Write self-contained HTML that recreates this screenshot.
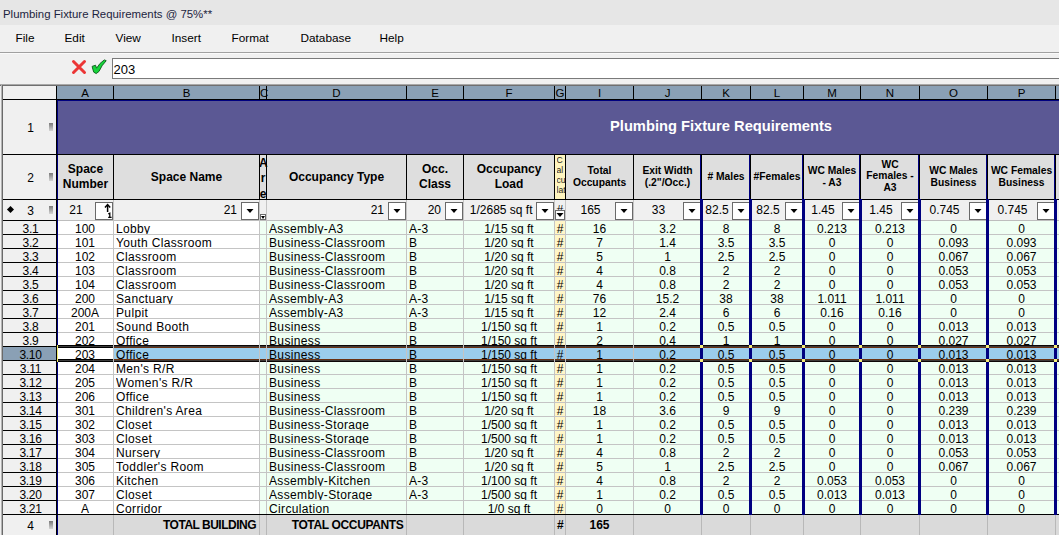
<!DOCTYPE html>
<html><head><meta charset="utf-8"><style>
html,body{margin:0;padding:0;}
body{width:1059px;height:535px;position:relative;overflow:hidden;background:#f0f0f0;font-family:"Liberation Sans",sans-serif;}
body>div{position:absolute;}
.t{white-space:nowrap;line-height:1;color:#000;}
</style></head><body>
<div style="left:0px;top:0px;width:1059px;height:25px;background:#e6e6e6;"></div>
<div class="t" style="left:3px;top:9px;font-size:11.4px;font-weight:400;color:#1c2440;">Plumbing Fixture Requirements @ 75%**</div>
<div style="left:1px;top:25px;width:1058px;height:27px;background:#f0f0f0;"></div>
<div class="t" style="left:15.5px;top:32.5px;font-size:11.8px;font-weight:400;color:#000;">File</div>
<div class="t" style="left:64.5px;top:32.5px;font-size:11.8px;font-weight:400;color:#000;">Edit</div>
<div class="t" style="left:115.5px;top:32.5px;font-size:11.8px;font-weight:400;color:#000;">View</div>
<div class="t" style="left:171.5px;top:32.5px;font-size:11.8px;font-weight:400;color:#000;">Insert</div>
<div class="t" style="left:231.5px;top:32.5px;font-size:11.8px;font-weight:400;color:#000;">Format</div>
<div class="t" style="left:300.5px;top:32.5px;font-size:11.8px;font-weight:400;color:#000;">Database</div>
<div class="t" style="left:379.5px;top:32.5px;font-size:11.8px;font-weight:400;color:#000;">Help</div>
<div style="left:0px;top:52px;width:1059px;height:1px;background:#a0a0a0;"></div>
<div style="left:0px;top:53px;width:1059px;height:31px;background:#f0f0f0;"></div>
<div style="left:0px;top:53px;width:1059px;height:1px;background:#fafafa;"></div>
<svg style="position:absolute;left:71px;top:59px" width="16" height="16" viewBox="0 0 16 16"><path d="M2.5 2.5 L13.5 13.5 M13.5 2.5 L2.5 13.5" stroke="#ec3636" stroke-width="3" stroke-linecap="round" fill="none"/></svg>
<svg style="position:absolute;left:91px;top:59px" width="16" height="16" viewBox="0 0 16 16"><path d="M1.1 7.4 L4.5 6.2 L5.6 9.2 Q8.5 4 13.3 0.9 L15.2 1.7 Q10.5 6.5 8 12.4 L5.2 14.6 L2.8 13.2 Q1.8 10.5 1.1 7.4 Z" fill="#16d43a" stroke="#0a5a1a" stroke-width="0.9" stroke-linejoin="round"/></svg>
<div style="left:112px;top:58px;width:957px;height:21px;background:#fff;border:1px solid #7a7a7a;box-sizing:border-box"></div>
<div class="t" style="left:113.6px;top:63px;font-size:13px;font-weight:400;color:#000;">203</div>
<div style="left:0px;top:84px;width:1059px;height:1px;background:#a8a8a8;"></div>
<div style="left:0px;top:85px;width:1059px;height:1px;background:#6f6f6f;"></div>
<div style="left:2px;top:85px;width:1px;height:450px;background:#6a6a6a;"></div>
<div style="left:1px;top:85px;width:1px;height:450px;background:#b4b4b4;"></div>
<div style="left:3px;top:86px;width:53px;height:449px;background:#f0f0f0;"></div>
<div style="left:57px;top:86px;width:1002px;height:13px;background:#8aa0b5;"></div>
<div class="t" style="left:57px;top:88px;width:56px;text-align:center;font-size:11.5px;font-weight:400;color:#000;">A</div>
<div class="t" style="left:114px;top:88px;width:145px;text-align:center;font-size:11.5px;font-weight:400;color:#000;">B</div>
<div class="t" style="left:260px;top:88px;width:6px;text-align:center;font-size:11.5px;font-weight:400;color:#000;">C</div>
<div class="t" style="left:267px;top:88px;width:139px;text-align:center;font-size:11.5px;font-weight:400;color:#000;">D</div>
<div class="t" style="left:407px;top:88px;width:56px;text-align:center;font-size:11.5px;font-weight:400;color:#000;">E</div>
<div class="t" style="left:464px;top:88px;width:90px;text-align:center;font-size:11.5px;font-weight:400;color:#000;">F</div>
<div class="t" style="left:555px;top:88px;width:10px;text-align:center;font-size:11.5px;font-weight:400;color:#000;">G</div>
<div class="t" style="left:566px;top:88px;width:67px;text-align:center;font-size:11.5px;font-weight:400;color:#000;">I</div>
<div class="t" style="left:634px;top:88px;width:67px;text-align:center;font-size:11.5px;font-weight:400;color:#000;">J</div>
<div class="t" style="left:702px;top:88px;width:48px;text-align:center;font-size:11.5px;font-weight:400;color:#000;">K</div>
<div class="t" style="left:751px;top:88px;width:52px;text-align:center;font-size:11.5px;font-weight:400;color:#000;">L</div>
<div class="t" style="left:804px;top:88px;width:56px;text-align:center;font-size:11.5px;font-weight:400;color:#000;">M</div>
<div class="t" style="left:861px;top:88px;width:58px;text-align:center;font-size:11.5px;font-weight:400;color:#000;">N</div>
<div class="t" style="left:920px;top:88px;width:67px;text-align:center;font-size:11.5px;font-weight:400;color:#000;">O</div>
<div class="t" style="left:988px;top:88px;width:67px;text-align:center;font-size:11.5px;font-weight:400;color:#000;">P</div>
<div class="t" style="left:1056px;top:88px;width:64px;text-align:center;font-size:11.5px;font-weight:400;color:#000;">Q</div>
<div style="left:56px;top:86px;width:1px;height:13px;background:#000;"></div>
<div style="left:113px;top:86px;width:1px;height:13px;background:#000;"></div>
<div style="left:259px;top:86px;width:1px;height:13px;background:#000;"></div>
<div style="left:266px;top:86px;width:1px;height:13px;background:#000;"></div>
<div style="left:406px;top:86px;width:1px;height:13px;background:#000;"></div>
<div style="left:463px;top:86px;width:1px;height:13px;background:#000;"></div>
<div style="left:554px;top:86px;width:1px;height:13px;background:#000;"></div>
<div style="left:565px;top:86px;width:1px;height:13px;background:#000;"></div>
<div style="left:633px;top:86px;width:1px;height:13px;background:#000;"></div>
<div style="left:701px;top:86px;width:1px;height:13px;background:#000;"></div>
<div style="left:750px;top:86px;width:1px;height:13px;background:#000;"></div>
<div style="left:803px;top:86px;width:1px;height:13px;background:#000;"></div>
<div style="left:860px;top:86px;width:1px;height:13px;background:#000;"></div>
<div style="left:919px;top:86px;width:1px;height:13px;background:#000;"></div>
<div style="left:987px;top:86px;width:1px;height:13px;background:#000;"></div>
<div style="left:1055px;top:86px;width:1px;height:13px;background:#000;"></div>
<div style="left:3px;top:99px;width:1056px;height:1px;background:#000;"></div>
<div style="left:57px;top:100px;width:1002px;height:1px;background:#000080;"></div>
<div style="left:57px;top:100px;width:1px;height:435px;background:#000080;"></div>
<div style="left:58px;top:101px;width:1001px;height:53px;background:#5b5894;"></div>
<div class="t" style="left:561px;top:118.5px;width:320px;text-align:center;font-size:14.7px;font-weight:700;color:#fff;">Plumbing Fixture Requirements</div>
<div style="left:3px;top:154px;width:1056px;height:1px;background:#000;"></div>
<div style="left:58px;top:155px;width:1001px;height:44px;background:#dedede;"></div>
<div style="left:555px;top:155px;width:10px;height:44px;background:#fff5bf;"></div>
<div style="left:3px;top:199px;width:1056px;height:1px;background:#000;"></div>
<div style="left:113px;top:155px;width:1px;height:44px;background:#000;"></div>
<div style="left:259px;top:155px;width:1px;height:44px;background:#000;"></div>
<div style="left:266px;top:155px;width:1px;height:44px;background:#000;"></div>
<div style="left:406px;top:155px;width:1px;height:44px;background:#000;"></div>
<div style="left:463px;top:155px;width:1px;height:44px;background:#000;"></div>
<div style="left:554px;top:155px;width:1px;height:44px;background:#000;"></div>
<div style="left:565px;top:155px;width:1px;height:44px;background:#000;"></div>
<div style="left:633px;top:155px;width:1px;height:44px;background:#000;"></div>
<div style="left:700px;top:155px;width:1px;height:44px;background:#000080;"></div>
<div style="left:701px;top:155px;width:1px;height:44px;background:#000;"></div>
<div style="left:749px;top:155px;width:1px;height:44px;background:#000080;"></div>
<div style="left:750px;top:155px;width:1px;height:44px;background:#000;"></div>
<div style="left:802px;top:155px;width:1px;height:44px;background:#000080;"></div>
<div style="left:803px;top:155px;width:1px;height:44px;background:#000;"></div>
<div style="left:859px;top:155px;width:1px;height:44px;background:#000080;"></div>
<div style="left:860px;top:155px;width:1px;height:44px;background:#000;"></div>
<div style="left:918px;top:155px;width:1px;height:44px;background:#000080;"></div>
<div style="left:919px;top:155px;width:1px;height:44px;background:#000;"></div>
<div style="left:986px;top:155px;width:1px;height:44px;background:#000080;"></div>
<div style="left:987px;top:155px;width:1px;height:44px;background:#000;"></div>
<div style="left:1054px;top:155px;width:1px;height:44px;background:#000080;"></div>
<div style="left:1055px;top:155px;width:1px;height:44px;background:#000;"></div>
<div class="t" style="left:58px;top:163px;width:55px;text-align:center;font-size:12px;font-weight:700;color:#000;">Space</div>
<div class="t" style="left:58px;top:178px;width:55px;text-align:center;font-size:12px;font-weight:700;color:#000;">Number</div>
<div class="t" style="left:114px;top:171px;width:145px;text-align:center;font-size:12px;font-weight:700;color:#000;">Space Name</div>
<div class="t" style="left:407px;top:163px;width:56px;text-align:center;font-size:12px;font-weight:700;color:#000;">Occ.</div>
<div class="t" style="left:407px;top:178px;width:56px;text-align:center;font-size:12px;font-weight:700;color:#000;">Class</div>
<div class="t" style="left:464px;top:163px;width:90px;text-align:center;font-size:12px;font-weight:700;color:#000;">Occupancy</div>
<div class="t" style="left:464px;top:178px;width:90px;text-align:center;font-size:12px;font-weight:700;color:#000;">Load</div>
<div class="t" style="left:267px;top:171px;width:139px;text-align:center;font-size:12px;font-weight:700;color:#000;">Occupancy Type</div>
<div class="t" style="left:566px;top:166px;width:67px;text-align:center;font-size:10.3px;font-weight:700;color:#000;">Total</div>
<div class="t" style="left:566px;top:178px;width:67px;text-align:center;font-size:10.3px;font-weight:700;color:#000;">Occupants</div>
<div class="t" style="left:634px;top:166px;width:67px;text-align:center;font-size:10.3px;font-weight:700;color:#000;">Exit Width</div>
<div class="t" style="left:634px;top:178px;width:67px;text-align:center;font-size:10.3px;font-weight:700;color:#000;">(.2"/Occ.)</div>
<div class="t" style="left:702px;top:172px;width:48px;text-align:center;font-size:10.3px;font-weight:700;color:#000;"># Males</div>
<div class="t" style="left:751px;top:172px;width:52px;text-align:center;font-size:10.3px;font-weight:700;color:#000;">#Females</div>
<div class="t" style="left:804px;top:166px;width:56px;text-align:center;font-size:10.3px;font-weight:700;color:#000;">WC Males</div>
<div class="t" style="left:804px;top:178px;width:56px;text-align:center;font-size:10.3px;font-weight:700;color:#000;">- A3</div>
<div class="t" style="left:861px;top:159.5px;width:58px;text-align:center;font-size:10.3px;font-weight:700;color:#000;">WC</div>
<div class="t" style="left:861px;top:171.3px;width:58px;text-align:center;font-size:10.3px;font-weight:700;color:#000;">Females -</div>
<div class="t" style="left:861px;top:183.1px;width:58px;text-align:center;font-size:10.3px;font-weight:700;color:#000;">A3</div>
<div class="t" style="left:920px;top:166px;width:67px;text-align:center;font-size:10.3px;font-weight:700;color:#000;">WC Males</div>
<div class="t" style="left:920px;top:178px;width:67px;text-align:center;font-size:10.3px;font-weight:700;color:#000;">Business</div>
<div class="t" style="left:988px;top:166px;width:67px;text-align:center;font-size:10.3px;font-weight:700;color:#000;">WC Females</div>
<div class="t" style="left:988px;top:178px;width:67px;text-align:center;font-size:10.3px;font-weight:700;color:#000;">Business</div>
<div class="t" style="left:259px;top:156.5px;width:8px;text-align:center;font-size:12px;font-weight:700;color:#000;">A</div>
<div class="t" style="left:259px;top:172.0px;width:8px;text-align:center;font-size:12px;font-weight:700;color:#000;">r</div>
<div class="t" style="left:259px;top:187.5px;width:8px;text-align:center;font-size:12px;font-weight:700;color:#000;">e</div>
<div class="t" style="left:556.5px;top:156px;font-size:8.6px;font-weight:400;color:#2a2418;overflow:hidden;width:8.5px">C</div>
<div class="t" style="left:556.5px;top:166px;font-size:8.6px;font-weight:400;color:#2a2418;overflow:hidden;width:8.5px">al</div>
<div class="t" style="left:556.5px;top:176px;font-size:8.6px;font-weight:400;color:#2a2418;overflow:hidden;width:8.5px">cu</div>
<div class="t" style="left:556.5px;top:186px;font-size:8.6px;font-weight:400;color:#2a2418;overflow:hidden;width:8.5px">lat</div>
<div style="left:58px;top:200px;width:1001px;height:20px;background:#f0f0f0;"></div>
<div style="left:3px;top:220px;width:53px;height:1px;background:#000;"></div>
<div style="left:58px;top:221px;width:55px;height:294px;background:#ffffff;"></div>
<div style="left:114px;top:221px;width:145px;height:294px;background:#ffffff;"></div>
<div style="left:260px;top:221px;width:799px;height:294px;background:#effff3;"></div>
<div style="left:555px;top:221px;width:10px;height:294px;background:#fff6c8;"></div>
<div style="left:58px;top:234px;width:1001px;height:1px;background:#c4c4c4;"></div>
<div style="left:3px;top:234px;width:53px;height:1px;background:#000;"></div>
<div style="left:58px;top:248px;width:1001px;height:1px;background:#c4c4c4;"></div>
<div style="left:3px;top:248px;width:53px;height:1px;background:#000;"></div>
<div style="left:58px;top:262px;width:1001px;height:1px;background:#c4c4c4;"></div>
<div style="left:3px;top:262px;width:53px;height:1px;background:#000;"></div>
<div style="left:58px;top:276px;width:1001px;height:1px;background:#c4c4c4;"></div>
<div style="left:3px;top:276px;width:53px;height:1px;background:#000;"></div>
<div style="left:58px;top:290px;width:1001px;height:1px;background:#c4c4c4;"></div>
<div style="left:3px;top:290px;width:53px;height:1px;background:#000;"></div>
<div style="left:58px;top:304px;width:1001px;height:1px;background:#c4c4c4;"></div>
<div style="left:3px;top:304px;width:53px;height:1px;background:#000;"></div>
<div style="left:58px;top:318px;width:1001px;height:1px;background:#c4c4c4;"></div>
<div style="left:3px;top:318px;width:53px;height:1px;background:#000;"></div>
<div style="left:58px;top:332px;width:1001px;height:1px;background:#c4c4c4;"></div>
<div style="left:3px;top:332px;width:53px;height:1px;background:#000;"></div>
<div style="left:58px;top:346px;width:1001px;height:1px;background:#c4c4c4;"></div>
<div style="left:3px;top:346px;width:53px;height:1px;background:#000;"></div>
<div style="left:58px;top:360px;width:1001px;height:1px;background:#c4c4c4;"></div>
<div style="left:3px;top:360px;width:53px;height:1px;background:#000;"></div>
<div style="left:58px;top:374px;width:1001px;height:1px;background:#c4c4c4;"></div>
<div style="left:3px;top:374px;width:53px;height:1px;background:#000;"></div>
<div style="left:58px;top:388px;width:1001px;height:1px;background:#c4c4c4;"></div>
<div style="left:3px;top:388px;width:53px;height:1px;background:#000;"></div>
<div style="left:58px;top:402px;width:1001px;height:1px;background:#c4c4c4;"></div>
<div style="left:3px;top:402px;width:53px;height:1px;background:#000;"></div>
<div style="left:58px;top:416px;width:1001px;height:1px;background:#c4c4c4;"></div>
<div style="left:3px;top:416px;width:53px;height:1px;background:#000;"></div>
<div style="left:58px;top:430px;width:1001px;height:1px;background:#c4c4c4;"></div>
<div style="left:3px;top:430px;width:53px;height:1px;background:#000;"></div>
<div style="left:58px;top:444px;width:1001px;height:1px;background:#c4c4c4;"></div>
<div style="left:3px;top:444px;width:53px;height:1px;background:#000;"></div>
<div style="left:58px;top:458px;width:1001px;height:1px;background:#c4c4c4;"></div>
<div style="left:3px;top:458px;width:53px;height:1px;background:#000;"></div>
<div style="left:58px;top:472px;width:1001px;height:1px;background:#c4c4c4;"></div>
<div style="left:3px;top:472px;width:53px;height:1px;background:#000;"></div>
<div style="left:58px;top:486px;width:1001px;height:1px;background:#c4c4c4;"></div>
<div style="left:3px;top:486px;width:53px;height:1px;background:#000;"></div>
<div style="left:58px;top:500px;width:1001px;height:1px;background:#c4c4c4;"></div>
<div style="left:3px;top:500px;width:53px;height:1px;background:#000;"></div>
<div style="left:58px;top:220px;width:1001px;height:1px;background:#bdbdbd;"></div>
<div style="left:3px;top:514px;width:1056px;height:1px;background:#000;"></div>
<div style="left:113px;top:200px;width:1px;height:314px;background:#c4c4c4;"></div>
<div style="left:259px;top:200px;width:1px;height:314px;background:#c4c4c4;"></div>
<div style="left:266px;top:200px;width:1px;height:314px;background:#c4c4c4;"></div>
<div style="left:406px;top:200px;width:1px;height:314px;background:#c4c4c4;"></div>
<div style="left:463px;top:200px;width:1px;height:314px;background:#c4c4c4;"></div>
<div style="left:554px;top:200px;width:1px;height:314px;background:#c4c4c4;"></div>
<div style="left:565px;top:200px;width:1px;height:314px;background:#c4c4c4;"></div>
<div style="left:633px;top:200px;width:1px;height:314px;background:#c4c4c4;"></div>
<div style="left:700px;top:199px;width:3px;height:316px;background:#000080;"></div>
<div style="left:749px;top:199px;width:3px;height:316px;background:#000080;"></div>
<div style="left:802px;top:199px;width:3px;height:316px;background:#000080;"></div>
<div style="left:859px;top:199px;width:3px;height:316px;background:#000080;"></div>
<div style="left:918px;top:199px;width:3px;height:316px;background:#000080;"></div>
<div style="left:986px;top:199px;width:3px;height:316px;background:#000080;"></div>
<div style="left:1054px;top:199px;width:3px;height:316px;background:#000080;"></div>
<div style="left:58px;top:347px;width:1001px;height:13px;background:#9bcdec;"></div>
<div style="left:58px;top:347px;width:55px;height:13px;background:#ffffff;"></div>
<div style="left:3px;top:347px;width:53px;height:13px;background:#8aa0b5;"></div>
<div class="t" style="left:4px;top:222.5px;width:53px;text-align:center;font-size:12px;font-weight:400;color:#000;line-height:13px;letter-spacing:-0.3px">3.1</div>
<div class="t" style="left:4px;top:236.5px;width:53px;text-align:center;font-size:12px;font-weight:400;color:#000;line-height:13px;letter-spacing:-0.3px">3.2</div>
<div class="t" style="left:4px;top:250.5px;width:53px;text-align:center;font-size:12px;font-weight:400;color:#000;line-height:13px;letter-spacing:-0.3px">3.3</div>
<div class="t" style="left:4px;top:264.5px;width:53px;text-align:center;font-size:12px;font-weight:400;color:#000;line-height:13px;letter-spacing:-0.3px">3.4</div>
<div class="t" style="left:4px;top:278.5px;width:53px;text-align:center;font-size:12px;font-weight:400;color:#000;line-height:13px;letter-spacing:-0.3px">3.5</div>
<div class="t" style="left:4px;top:292.5px;width:53px;text-align:center;font-size:12px;font-weight:400;color:#000;line-height:13px;letter-spacing:-0.3px">3.6</div>
<div class="t" style="left:4px;top:306.5px;width:53px;text-align:center;font-size:12px;font-weight:400;color:#000;line-height:13px;letter-spacing:-0.3px">3.7</div>
<div class="t" style="left:4px;top:320.5px;width:53px;text-align:center;font-size:12px;font-weight:400;color:#000;line-height:13px;letter-spacing:-0.3px">3.8</div>
<div class="t" style="left:4px;top:334.5px;width:53px;text-align:center;font-size:12px;font-weight:400;color:#000;line-height:13px;letter-spacing:-0.3px">3.9</div>
<div class="t" style="left:4px;top:348.5px;width:53px;text-align:center;font-size:12px;font-weight:400;color:#000;line-height:13px;letter-spacing:-0.3px">3.10</div>
<div class="t" style="left:4px;top:362.5px;width:53px;text-align:center;font-size:12px;font-weight:400;color:#000;line-height:13px;letter-spacing:-0.3px">3.11</div>
<div class="t" style="left:4px;top:376.5px;width:53px;text-align:center;font-size:12px;font-weight:400;color:#000;line-height:13px;letter-spacing:-0.3px">3.12</div>
<div class="t" style="left:4px;top:390.5px;width:53px;text-align:center;font-size:12px;font-weight:400;color:#000;line-height:13px;letter-spacing:-0.3px">3.13</div>
<div class="t" style="left:4px;top:404.5px;width:53px;text-align:center;font-size:12px;font-weight:400;color:#000;line-height:13px;letter-spacing:-0.3px">3.14</div>
<div class="t" style="left:4px;top:418.5px;width:53px;text-align:center;font-size:12px;font-weight:400;color:#000;line-height:13px;letter-spacing:-0.3px">3.15</div>
<div class="t" style="left:4px;top:432.5px;width:53px;text-align:center;font-size:12px;font-weight:400;color:#000;line-height:13px;letter-spacing:-0.3px">3.16</div>
<div class="t" style="left:4px;top:446.5px;width:53px;text-align:center;font-size:12px;font-weight:400;color:#000;line-height:13px;letter-spacing:-0.3px">3.17</div>
<div class="t" style="left:4px;top:460.5px;width:53px;text-align:center;font-size:12px;font-weight:400;color:#000;line-height:13px;letter-spacing:-0.3px">3.18</div>
<div class="t" style="left:4px;top:474.5px;width:53px;text-align:center;font-size:12px;font-weight:400;color:#000;line-height:13px;letter-spacing:-0.3px">3.19</div>
<div class="t" style="left:4px;top:488.5px;width:53px;text-align:center;font-size:12px;font-weight:400;color:#000;line-height:13px;letter-spacing:-0.3px">3.20</div>
<div class="t" style="left:4px;top:502.5px;width:53px;text-align:center;font-size:12px;font-weight:400;color:#000;line-height:13px;letter-spacing:-0.3px">3.21</div>
<div class="t" style="left:57px;top:223px;width:56px;text-align:center;font-size:12px;font-weight:400;color:#000;line-height:13px;letter-spacing:0px;overflow:hidden;height:11px">100</div>
<div class="t" style="left:116px;top:223px;font-size:12px;letter-spacing:0.35px;line-height:13px;overflow:hidden;height:11px;width:143px">Lobby</div>
<div class="t" style="left:269px;top:223px;font-size:12px;letter-spacing:0.35px;line-height:13px;overflow:hidden;height:11px;width:137px">Assembly-A3</div>
<div class="t" style="left:409px;top:223px;font-size:12px;letter-spacing:0.2px;line-height:13px;overflow:hidden;height:11px;width:54px">A-3</div>
<div class="t" style="left:464px;top:223px;width:90px;text-align:center;font-size:12px;font-weight:400;color:#000;line-height:13px;letter-spacing:0px;overflow:hidden;height:11px">1/15 sq ft</div>
<div class="t" style="left:555px;top:223px;width:10px;text-align:center;font-size:12px;font-weight:400;color:#000;line-height:13px;letter-spacing:0px;overflow:hidden;height:11px">#</div>
<div class="t" style="left:566px;top:223px;width:67px;text-align:center;font-size:12px;font-weight:400;color:#000;line-height:13px;letter-spacing:0px;overflow:hidden;height:11px">16</div>
<div class="t" style="left:634px;top:223px;width:67px;text-align:center;font-size:12px;font-weight:400;color:#000;line-height:13px;letter-spacing:0px;overflow:hidden;height:11px">3.2</div>
<div class="t" style="left:702px;top:223px;width:48px;text-align:center;font-size:12px;font-weight:400;color:#000;line-height:13px;letter-spacing:0px;overflow:hidden;height:11px">8</div>
<div class="t" style="left:751px;top:223px;width:52px;text-align:center;font-size:12px;font-weight:400;color:#000;line-height:13px;letter-spacing:0px;overflow:hidden;height:11px">8</div>
<div class="t" style="left:804px;top:223px;width:56px;text-align:center;font-size:12px;font-weight:400;color:#000;line-height:13px;letter-spacing:0px;overflow:hidden;height:11px">0.213</div>
<div class="t" style="left:861px;top:223px;width:58px;text-align:center;font-size:12px;font-weight:400;color:#000;line-height:13px;letter-spacing:0px;overflow:hidden;height:11px">0.213</div>
<div class="t" style="left:920px;top:223px;width:67px;text-align:center;font-size:12px;font-weight:400;color:#000;line-height:13px;letter-spacing:0px;overflow:hidden;height:11px">0</div>
<div class="t" style="left:988px;top:223px;width:67px;text-align:center;font-size:12px;font-weight:400;color:#000;line-height:13px;letter-spacing:0px;overflow:hidden;height:11px">0</div>
<div class="t" style="left:57px;top:237px;width:56px;text-align:center;font-size:12px;font-weight:400;color:#000;line-height:13px;letter-spacing:0px;overflow:hidden;height:11px">101</div>
<div class="t" style="left:116px;top:237px;font-size:12px;letter-spacing:0.35px;line-height:13px;overflow:hidden;height:11px;width:143px">Youth Classroom</div>
<div class="t" style="left:269px;top:237px;font-size:12px;letter-spacing:0.35px;line-height:13px;overflow:hidden;height:11px;width:137px">Business-Classroom</div>
<div class="t" style="left:409px;top:237px;font-size:12px;letter-spacing:0.2px;line-height:13px;overflow:hidden;height:11px;width:54px">B</div>
<div class="t" style="left:464px;top:237px;width:90px;text-align:center;font-size:12px;font-weight:400;color:#000;line-height:13px;letter-spacing:0px;overflow:hidden;height:11px">1/20 sq ft</div>
<div class="t" style="left:555px;top:237px;width:10px;text-align:center;font-size:12px;font-weight:400;color:#000;line-height:13px;letter-spacing:0px;overflow:hidden;height:11px">#</div>
<div class="t" style="left:566px;top:237px;width:67px;text-align:center;font-size:12px;font-weight:400;color:#000;line-height:13px;letter-spacing:0px;overflow:hidden;height:11px">7</div>
<div class="t" style="left:634px;top:237px;width:67px;text-align:center;font-size:12px;font-weight:400;color:#000;line-height:13px;letter-spacing:0px;overflow:hidden;height:11px">1.4</div>
<div class="t" style="left:702px;top:237px;width:48px;text-align:center;font-size:12px;font-weight:400;color:#000;line-height:13px;letter-spacing:0px;overflow:hidden;height:11px">3.5</div>
<div class="t" style="left:751px;top:237px;width:52px;text-align:center;font-size:12px;font-weight:400;color:#000;line-height:13px;letter-spacing:0px;overflow:hidden;height:11px">3.5</div>
<div class="t" style="left:804px;top:237px;width:56px;text-align:center;font-size:12px;font-weight:400;color:#000;line-height:13px;letter-spacing:0px;overflow:hidden;height:11px">0</div>
<div class="t" style="left:861px;top:237px;width:58px;text-align:center;font-size:12px;font-weight:400;color:#000;line-height:13px;letter-spacing:0px;overflow:hidden;height:11px">0</div>
<div class="t" style="left:920px;top:237px;width:67px;text-align:center;font-size:12px;font-weight:400;color:#000;line-height:13px;letter-spacing:0px;overflow:hidden;height:11px">0.093</div>
<div class="t" style="left:988px;top:237px;width:67px;text-align:center;font-size:12px;font-weight:400;color:#000;line-height:13px;letter-spacing:0px;overflow:hidden;height:11px">0.093</div>
<div class="t" style="left:57px;top:251px;width:56px;text-align:center;font-size:12px;font-weight:400;color:#000;line-height:13px;letter-spacing:0px;overflow:hidden;height:11px">102</div>
<div class="t" style="left:116px;top:251px;font-size:12px;letter-spacing:0.35px;line-height:13px;overflow:hidden;height:11px;width:143px">Classroom</div>
<div class="t" style="left:269px;top:251px;font-size:12px;letter-spacing:0.35px;line-height:13px;overflow:hidden;height:11px;width:137px">Business-Classroom</div>
<div class="t" style="left:409px;top:251px;font-size:12px;letter-spacing:0.2px;line-height:13px;overflow:hidden;height:11px;width:54px">B</div>
<div class="t" style="left:464px;top:251px;width:90px;text-align:center;font-size:12px;font-weight:400;color:#000;line-height:13px;letter-spacing:0px;overflow:hidden;height:11px">1/20 sq ft</div>
<div class="t" style="left:555px;top:251px;width:10px;text-align:center;font-size:12px;font-weight:400;color:#000;line-height:13px;letter-spacing:0px;overflow:hidden;height:11px">#</div>
<div class="t" style="left:566px;top:251px;width:67px;text-align:center;font-size:12px;font-weight:400;color:#000;line-height:13px;letter-spacing:0px;overflow:hidden;height:11px">5</div>
<div class="t" style="left:634px;top:251px;width:67px;text-align:center;font-size:12px;font-weight:400;color:#000;line-height:13px;letter-spacing:0px;overflow:hidden;height:11px">1</div>
<div class="t" style="left:702px;top:251px;width:48px;text-align:center;font-size:12px;font-weight:400;color:#000;line-height:13px;letter-spacing:0px;overflow:hidden;height:11px">2.5</div>
<div class="t" style="left:751px;top:251px;width:52px;text-align:center;font-size:12px;font-weight:400;color:#000;line-height:13px;letter-spacing:0px;overflow:hidden;height:11px">2.5</div>
<div class="t" style="left:804px;top:251px;width:56px;text-align:center;font-size:12px;font-weight:400;color:#000;line-height:13px;letter-spacing:0px;overflow:hidden;height:11px">0</div>
<div class="t" style="left:861px;top:251px;width:58px;text-align:center;font-size:12px;font-weight:400;color:#000;line-height:13px;letter-spacing:0px;overflow:hidden;height:11px">0</div>
<div class="t" style="left:920px;top:251px;width:67px;text-align:center;font-size:12px;font-weight:400;color:#000;line-height:13px;letter-spacing:0px;overflow:hidden;height:11px">0.067</div>
<div class="t" style="left:988px;top:251px;width:67px;text-align:center;font-size:12px;font-weight:400;color:#000;line-height:13px;letter-spacing:0px;overflow:hidden;height:11px">0.067</div>
<div class="t" style="left:57px;top:265px;width:56px;text-align:center;font-size:12px;font-weight:400;color:#000;line-height:13px;letter-spacing:0px;overflow:hidden;height:11px">103</div>
<div class="t" style="left:116px;top:265px;font-size:12px;letter-spacing:0.35px;line-height:13px;overflow:hidden;height:11px;width:143px">Classroom</div>
<div class="t" style="left:269px;top:265px;font-size:12px;letter-spacing:0.35px;line-height:13px;overflow:hidden;height:11px;width:137px">Business-Classroom</div>
<div class="t" style="left:409px;top:265px;font-size:12px;letter-spacing:0.2px;line-height:13px;overflow:hidden;height:11px;width:54px">B</div>
<div class="t" style="left:464px;top:265px;width:90px;text-align:center;font-size:12px;font-weight:400;color:#000;line-height:13px;letter-spacing:0px;overflow:hidden;height:11px">1/20 sq ft</div>
<div class="t" style="left:555px;top:265px;width:10px;text-align:center;font-size:12px;font-weight:400;color:#000;line-height:13px;letter-spacing:0px;overflow:hidden;height:11px">#</div>
<div class="t" style="left:566px;top:265px;width:67px;text-align:center;font-size:12px;font-weight:400;color:#000;line-height:13px;letter-spacing:0px;overflow:hidden;height:11px">4</div>
<div class="t" style="left:634px;top:265px;width:67px;text-align:center;font-size:12px;font-weight:400;color:#000;line-height:13px;letter-spacing:0px;overflow:hidden;height:11px">0.8</div>
<div class="t" style="left:702px;top:265px;width:48px;text-align:center;font-size:12px;font-weight:400;color:#000;line-height:13px;letter-spacing:0px;overflow:hidden;height:11px">2</div>
<div class="t" style="left:751px;top:265px;width:52px;text-align:center;font-size:12px;font-weight:400;color:#000;line-height:13px;letter-spacing:0px;overflow:hidden;height:11px">2</div>
<div class="t" style="left:804px;top:265px;width:56px;text-align:center;font-size:12px;font-weight:400;color:#000;line-height:13px;letter-spacing:0px;overflow:hidden;height:11px">0</div>
<div class="t" style="left:861px;top:265px;width:58px;text-align:center;font-size:12px;font-weight:400;color:#000;line-height:13px;letter-spacing:0px;overflow:hidden;height:11px">0</div>
<div class="t" style="left:920px;top:265px;width:67px;text-align:center;font-size:12px;font-weight:400;color:#000;line-height:13px;letter-spacing:0px;overflow:hidden;height:11px">0.053</div>
<div class="t" style="left:988px;top:265px;width:67px;text-align:center;font-size:12px;font-weight:400;color:#000;line-height:13px;letter-spacing:0px;overflow:hidden;height:11px">0.053</div>
<div class="t" style="left:57px;top:279px;width:56px;text-align:center;font-size:12px;font-weight:400;color:#000;line-height:13px;letter-spacing:0px;overflow:hidden;height:11px">104</div>
<div class="t" style="left:116px;top:279px;font-size:12px;letter-spacing:0.35px;line-height:13px;overflow:hidden;height:11px;width:143px">Classroom</div>
<div class="t" style="left:269px;top:279px;font-size:12px;letter-spacing:0.35px;line-height:13px;overflow:hidden;height:11px;width:137px">Business-Classroom</div>
<div class="t" style="left:409px;top:279px;font-size:12px;letter-spacing:0.2px;line-height:13px;overflow:hidden;height:11px;width:54px">B</div>
<div class="t" style="left:464px;top:279px;width:90px;text-align:center;font-size:12px;font-weight:400;color:#000;line-height:13px;letter-spacing:0px;overflow:hidden;height:11px">1/20 sq ft</div>
<div class="t" style="left:555px;top:279px;width:10px;text-align:center;font-size:12px;font-weight:400;color:#000;line-height:13px;letter-spacing:0px;overflow:hidden;height:11px">#</div>
<div class="t" style="left:566px;top:279px;width:67px;text-align:center;font-size:12px;font-weight:400;color:#000;line-height:13px;letter-spacing:0px;overflow:hidden;height:11px">4</div>
<div class="t" style="left:634px;top:279px;width:67px;text-align:center;font-size:12px;font-weight:400;color:#000;line-height:13px;letter-spacing:0px;overflow:hidden;height:11px">0.8</div>
<div class="t" style="left:702px;top:279px;width:48px;text-align:center;font-size:12px;font-weight:400;color:#000;line-height:13px;letter-spacing:0px;overflow:hidden;height:11px">2</div>
<div class="t" style="left:751px;top:279px;width:52px;text-align:center;font-size:12px;font-weight:400;color:#000;line-height:13px;letter-spacing:0px;overflow:hidden;height:11px">2</div>
<div class="t" style="left:804px;top:279px;width:56px;text-align:center;font-size:12px;font-weight:400;color:#000;line-height:13px;letter-spacing:0px;overflow:hidden;height:11px">0</div>
<div class="t" style="left:861px;top:279px;width:58px;text-align:center;font-size:12px;font-weight:400;color:#000;line-height:13px;letter-spacing:0px;overflow:hidden;height:11px">0</div>
<div class="t" style="left:920px;top:279px;width:67px;text-align:center;font-size:12px;font-weight:400;color:#000;line-height:13px;letter-spacing:0px;overflow:hidden;height:11px">0.053</div>
<div class="t" style="left:988px;top:279px;width:67px;text-align:center;font-size:12px;font-weight:400;color:#000;line-height:13px;letter-spacing:0px;overflow:hidden;height:11px">0.053</div>
<div class="t" style="left:57px;top:293px;width:56px;text-align:center;font-size:12px;font-weight:400;color:#000;line-height:13px;letter-spacing:0px;overflow:hidden;height:11px">200</div>
<div class="t" style="left:116px;top:293px;font-size:12px;letter-spacing:0.35px;line-height:13px;overflow:hidden;height:11px;width:143px">Sanctuary</div>
<div class="t" style="left:269px;top:293px;font-size:12px;letter-spacing:0.35px;line-height:13px;overflow:hidden;height:11px;width:137px">Assembly-A3</div>
<div class="t" style="left:409px;top:293px;font-size:12px;letter-spacing:0.2px;line-height:13px;overflow:hidden;height:11px;width:54px">A-3</div>
<div class="t" style="left:464px;top:293px;width:90px;text-align:center;font-size:12px;font-weight:400;color:#000;line-height:13px;letter-spacing:0px;overflow:hidden;height:11px">1/15 sq ft</div>
<div class="t" style="left:555px;top:293px;width:10px;text-align:center;font-size:12px;font-weight:400;color:#000;line-height:13px;letter-spacing:0px;overflow:hidden;height:11px">#</div>
<div class="t" style="left:566px;top:293px;width:67px;text-align:center;font-size:12px;font-weight:400;color:#000;line-height:13px;letter-spacing:0px;overflow:hidden;height:11px">76</div>
<div class="t" style="left:634px;top:293px;width:67px;text-align:center;font-size:12px;font-weight:400;color:#000;line-height:13px;letter-spacing:0px;overflow:hidden;height:11px">15.2</div>
<div class="t" style="left:702px;top:293px;width:48px;text-align:center;font-size:12px;font-weight:400;color:#000;line-height:13px;letter-spacing:0px;overflow:hidden;height:11px">38</div>
<div class="t" style="left:751px;top:293px;width:52px;text-align:center;font-size:12px;font-weight:400;color:#000;line-height:13px;letter-spacing:0px;overflow:hidden;height:11px">38</div>
<div class="t" style="left:804px;top:293px;width:56px;text-align:center;font-size:12px;font-weight:400;color:#000;line-height:13px;letter-spacing:0px;overflow:hidden;height:11px">1.011</div>
<div class="t" style="left:861px;top:293px;width:58px;text-align:center;font-size:12px;font-weight:400;color:#000;line-height:13px;letter-spacing:0px;overflow:hidden;height:11px">1.011</div>
<div class="t" style="left:920px;top:293px;width:67px;text-align:center;font-size:12px;font-weight:400;color:#000;line-height:13px;letter-spacing:0px;overflow:hidden;height:11px">0</div>
<div class="t" style="left:988px;top:293px;width:67px;text-align:center;font-size:12px;font-weight:400;color:#000;line-height:13px;letter-spacing:0px;overflow:hidden;height:11px">0</div>
<div class="t" style="left:57px;top:307px;width:56px;text-align:center;font-size:12px;font-weight:400;color:#000;line-height:13px;letter-spacing:0px;overflow:hidden;height:11px">200A</div>
<div class="t" style="left:116px;top:307px;font-size:12px;letter-spacing:0.35px;line-height:13px;overflow:hidden;height:11px;width:143px">Pulpit</div>
<div class="t" style="left:269px;top:307px;font-size:12px;letter-spacing:0.35px;line-height:13px;overflow:hidden;height:11px;width:137px">Assembly-A3</div>
<div class="t" style="left:409px;top:307px;font-size:12px;letter-spacing:0.2px;line-height:13px;overflow:hidden;height:11px;width:54px">A-3</div>
<div class="t" style="left:464px;top:307px;width:90px;text-align:center;font-size:12px;font-weight:400;color:#000;line-height:13px;letter-spacing:0px;overflow:hidden;height:11px">1/15 sq ft</div>
<div class="t" style="left:555px;top:307px;width:10px;text-align:center;font-size:12px;font-weight:400;color:#000;line-height:13px;letter-spacing:0px;overflow:hidden;height:11px">#</div>
<div class="t" style="left:566px;top:307px;width:67px;text-align:center;font-size:12px;font-weight:400;color:#000;line-height:13px;letter-spacing:0px;overflow:hidden;height:11px">12</div>
<div class="t" style="left:634px;top:307px;width:67px;text-align:center;font-size:12px;font-weight:400;color:#000;line-height:13px;letter-spacing:0px;overflow:hidden;height:11px">2.4</div>
<div class="t" style="left:702px;top:307px;width:48px;text-align:center;font-size:12px;font-weight:400;color:#000;line-height:13px;letter-spacing:0px;overflow:hidden;height:11px">6</div>
<div class="t" style="left:751px;top:307px;width:52px;text-align:center;font-size:12px;font-weight:400;color:#000;line-height:13px;letter-spacing:0px;overflow:hidden;height:11px">6</div>
<div class="t" style="left:804px;top:307px;width:56px;text-align:center;font-size:12px;font-weight:400;color:#000;line-height:13px;letter-spacing:0px;overflow:hidden;height:11px">0.16</div>
<div class="t" style="left:861px;top:307px;width:58px;text-align:center;font-size:12px;font-weight:400;color:#000;line-height:13px;letter-spacing:0px;overflow:hidden;height:11px">0.16</div>
<div class="t" style="left:920px;top:307px;width:67px;text-align:center;font-size:12px;font-weight:400;color:#000;line-height:13px;letter-spacing:0px;overflow:hidden;height:11px">0</div>
<div class="t" style="left:988px;top:307px;width:67px;text-align:center;font-size:12px;font-weight:400;color:#000;line-height:13px;letter-spacing:0px;overflow:hidden;height:11px">0</div>
<div class="t" style="left:57px;top:321px;width:56px;text-align:center;font-size:12px;font-weight:400;color:#000;line-height:13px;letter-spacing:0px;overflow:hidden;height:11px">201</div>
<div class="t" style="left:116px;top:321px;font-size:12px;letter-spacing:0.35px;line-height:13px;overflow:hidden;height:11px;width:143px">Sound Booth</div>
<div class="t" style="left:269px;top:321px;font-size:12px;letter-spacing:0.35px;line-height:13px;overflow:hidden;height:11px;width:137px">Business</div>
<div class="t" style="left:409px;top:321px;font-size:12px;letter-spacing:0.2px;line-height:13px;overflow:hidden;height:11px;width:54px">B</div>
<div class="t" style="left:464px;top:321px;width:90px;text-align:center;font-size:12px;font-weight:400;color:#000;line-height:13px;letter-spacing:0px;overflow:hidden;height:11px">1/150 sq ft</div>
<div class="t" style="left:555px;top:321px;width:10px;text-align:center;font-size:12px;font-weight:400;color:#000;line-height:13px;letter-spacing:0px;overflow:hidden;height:11px">#</div>
<div class="t" style="left:566px;top:321px;width:67px;text-align:center;font-size:12px;font-weight:400;color:#000;line-height:13px;letter-spacing:0px;overflow:hidden;height:11px">1</div>
<div class="t" style="left:634px;top:321px;width:67px;text-align:center;font-size:12px;font-weight:400;color:#000;line-height:13px;letter-spacing:0px;overflow:hidden;height:11px">0.2</div>
<div class="t" style="left:702px;top:321px;width:48px;text-align:center;font-size:12px;font-weight:400;color:#000;line-height:13px;letter-spacing:0px;overflow:hidden;height:11px">0.5</div>
<div class="t" style="left:751px;top:321px;width:52px;text-align:center;font-size:12px;font-weight:400;color:#000;line-height:13px;letter-spacing:0px;overflow:hidden;height:11px">0.5</div>
<div class="t" style="left:804px;top:321px;width:56px;text-align:center;font-size:12px;font-weight:400;color:#000;line-height:13px;letter-spacing:0px;overflow:hidden;height:11px">0</div>
<div class="t" style="left:861px;top:321px;width:58px;text-align:center;font-size:12px;font-weight:400;color:#000;line-height:13px;letter-spacing:0px;overflow:hidden;height:11px">0</div>
<div class="t" style="left:920px;top:321px;width:67px;text-align:center;font-size:12px;font-weight:400;color:#000;line-height:13px;letter-spacing:0px;overflow:hidden;height:11px">0.013</div>
<div class="t" style="left:988px;top:321px;width:67px;text-align:center;font-size:12px;font-weight:400;color:#000;line-height:13px;letter-spacing:0px;overflow:hidden;height:11px">0.013</div>
<div class="t" style="left:57px;top:335px;width:56px;text-align:center;font-size:12px;font-weight:400;color:#000;line-height:13px;letter-spacing:0px;overflow:hidden;height:11px">202</div>
<div class="t" style="left:116px;top:335px;font-size:12px;letter-spacing:0.35px;line-height:13px;overflow:hidden;height:11px;width:143px">Office</div>
<div class="t" style="left:269px;top:335px;font-size:12px;letter-spacing:0.35px;line-height:13px;overflow:hidden;height:11px;width:137px">Business</div>
<div class="t" style="left:409px;top:335px;font-size:12px;letter-spacing:0.2px;line-height:13px;overflow:hidden;height:11px;width:54px">B</div>
<div class="t" style="left:464px;top:335px;width:90px;text-align:center;font-size:12px;font-weight:400;color:#000;line-height:13px;letter-spacing:0px;overflow:hidden;height:11px">1/150 sq ft</div>
<div class="t" style="left:555px;top:335px;width:10px;text-align:center;font-size:12px;font-weight:400;color:#000;line-height:13px;letter-spacing:0px;overflow:hidden;height:11px">#</div>
<div class="t" style="left:566px;top:335px;width:67px;text-align:center;font-size:12px;font-weight:400;color:#000;line-height:13px;letter-spacing:0px;overflow:hidden;height:11px">2</div>
<div class="t" style="left:634px;top:335px;width:67px;text-align:center;font-size:12px;font-weight:400;color:#000;line-height:13px;letter-spacing:0px;overflow:hidden;height:11px">0.4</div>
<div class="t" style="left:702px;top:335px;width:48px;text-align:center;font-size:12px;font-weight:400;color:#000;line-height:13px;letter-spacing:0px;overflow:hidden;height:11px">1</div>
<div class="t" style="left:751px;top:335px;width:52px;text-align:center;font-size:12px;font-weight:400;color:#000;line-height:13px;letter-spacing:0px;overflow:hidden;height:11px">1</div>
<div class="t" style="left:804px;top:335px;width:56px;text-align:center;font-size:12px;font-weight:400;color:#000;line-height:13px;letter-spacing:0px;overflow:hidden;height:11px">0</div>
<div class="t" style="left:861px;top:335px;width:58px;text-align:center;font-size:12px;font-weight:400;color:#000;line-height:13px;letter-spacing:0px;overflow:hidden;height:11px">0</div>
<div class="t" style="left:920px;top:335px;width:67px;text-align:center;font-size:12px;font-weight:400;color:#000;line-height:13px;letter-spacing:0px;overflow:hidden;height:11px">0.027</div>
<div class="t" style="left:988px;top:335px;width:67px;text-align:center;font-size:12px;font-weight:400;color:#000;line-height:13px;letter-spacing:0px;overflow:hidden;height:11px">0.027</div>
<div class="t" style="left:57px;top:349px;width:56px;text-align:center;font-size:12px;font-weight:400;color:#000;line-height:13px;letter-spacing:0px;overflow:hidden;height:11px">203</div>
<div class="t" style="left:116px;top:349px;font-size:12px;letter-spacing:0.35px;line-height:13px;overflow:hidden;height:11px;width:143px">Office</div>
<div class="t" style="left:269px;top:349px;font-size:12px;letter-spacing:0.35px;line-height:13px;overflow:hidden;height:11px;width:137px">Business</div>
<div class="t" style="left:409px;top:349px;font-size:12px;letter-spacing:0.2px;line-height:13px;overflow:hidden;height:11px;width:54px">B</div>
<div class="t" style="left:464px;top:349px;width:90px;text-align:center;font-size:12px;font-weight:400;color:#000;line-height:13px;letter-spacing:0px;overflow:hidden;height:11px">1/150 sq ft</div>
<div class="t" style="left:555px;top:349px;width:10px;text-align:center;font-size:12px;font-weight:400;color:#000;line-height:13px;letter-spacing:0px;overflow:hidden;height:11px">#</div>
<div class="t" style="left:566px;top:349px;width:67px;text-align:center;font-size:12px;font-weight:400;color:#000;line-height:13px;letter-spacing:0px;overflow:hidden;height:11px">1</div>
<div class="t" style="left:634px;top:349px;width:67px;text-align:center;font-size:12px;font-weight:400;color:#000;line-height:13px;letter-spacing:0px;overflow:hidden;height:11px">0.2</div>
<div class="t" style="left:702px;top:349px;width:48px;text-align:center;font-size:12px;font-weight:400;color:#000;line-height:13px;letter-spacing:0px;overflow:hidden;height:11px">0.5</div>
<div class="t" style="left:751px;top:349px;width:52px;text-align:center;font-size:12px;font-weight:400;color:#000;line-height:13px;letter-spacing:0px;overflow:hidden;height:11px">0.5</div>
<div class="t" style="left:804px;top:349px;width:56px;text-align:center;font-size:12px;font-weight:400;color:#000;line-height:13px;letter-spacing:0px;overflow:hidden;height:11px">0</div>
<div class="t" style="left:861px;top:349px;width:58px;text-align:center;font-size:12px;font-weight:400;color:#000;line-height:13px;letter-spacing:0px;overflow:hidden;height:11px">0</div>
<div class="t" style="left:920px;top:349px;width:67px;text-align:center;font-size:12px;font-weight:400;color:#000;line-height:13px;letter-spacing:0px;overflow:hidden;height:11px">0.013</div>
<div class="t" style="left:988px;top:349px;width:67px;text-align:center;font-size:12px;font-weight:400;color:#000;line-height:13px;letter-spacing:0px;overflow:hidden;height:11px">0.013</div>
<div class="t" style="left:57px;top:363px;width:56px;text-align:center;font-size:12px;font-weight:400;color:#000;line-height:13px;letter-spacing:0px;overflow:hidden;height:11px">204</div>
<div class="t" style="left:116px;top:363px;font-size:12px;letter-spacing:0.35px;line-height:13px;overflow:hidden;height:11px;width:143px">Men's R/R</div>
<div class="t" style="left:269px;top:363px;font-size:12px;letter-spacing:0.35px;line-height:13px;overflow:hidden;height:11px;width:137px">Business</div>
<div class="t" style="left:409px;top:363px;font-size:12px;letter-spacing:0.2px;line-height:13px;overflow:hidden;height:11px;width:54px">B</div>
<div class="t" style="left:464px;top:363px;width:90px;text-align:center;font-size:12px;font-weight:400;color:#000;line-height:13px;letter-spacing:0px;overflow:hidden;height:11px">1/150 sq ft</div>
<div class="t" style="left:555px;top:363px;width:10px;text-align:center;font-size:12px;font-weight:400;color:#000;line-height:13px;letter-spacing:0px;overflow:hidden;height:11px">#</div>
<div class="t" style="left:566px;top:363px;width:67px;text-align:center;font-size:12px;font-weight:400;color:#000;line-height:13px;letter-spacing:0px;overflow:hidden;height:11px">1</div>
<div class="t" style="left:634px;top:363px;width:67px;text-align:center;font-size:12px;font-weight:400;color:#000;line-height:13px;letter-spacing:0px;overflow:hidden;height:11px">0.2</div>
<div class="t" style="left:702px;top:363px;width:48px;text-align:center;font-size:12px;font-weight:400;color:#000;line-height:13px;letter-spacing:0px;overflow:hidden;height:11px">0.5</div>
<div class="t" style="left:751px;top:363px;width:52px;text-align:center;font-size:12px;font-weight:400;color:#000;line-height:13px;letter-spacing:0px;overflow:hidden;height:11px">0.5</div>
<div class="t" style="left:804px;top:363px;width:56px;text-align:center;font-size:12px;font-weight:400;color:#000;line-height:13px;letter-spacing:0px;overflow:hidden;height:11px">0</div>
<div class="t" style="left:861px;top:363px;width:58px;text-align:center;font-size:12px;font-weight:400;color:#000;line-height:13px;letter-spacing:0px;overflow:hidden;height:11px">0</div>
<div class="t" style="left:920px;top:363px;width:67px;text-align:center;font-size:12px;font-weight:400;color:#000;line-height:13px;letter-spacing:0px;overflow:hidden;height:11px">0.013</div>
<div class="t" style="left:988px;top:363px;width:67px;text-align:center;font-size:12px;font-weight:400;color:#000;line-height:13px;letter-spacing:0px;overflow:hidden;height:11px">0.013</div>
<div class="t" style="left:57px;top:377px;width:56px;text-align:center;font-size:12px;font-weight:400;color:#000;line-height:13px;letter-spacing:0px;overflow:hidden;height:11px">205</div>
<div class="t" style="left:116px;top:377px;font-size:12px;letter-spacing:0.35px;line-height:13px;overflow:hidden;height:11px;width:143px">Women's R/R</div>
<div class="t" style="left:269px;top:377px;font-size:12px;letter-spacing:0.35px;line-height:13px;overflow:hidden;height:11px;width:137px">Business</div>
<div class="t" style="left:409px;top:377px;font-size:12px;letter-spacing:0.2px;line-height:13px;overflow:hidden;height:11px;width:54px">B</div>
<div class="t" style="left:464px;top:377px;width:90px;text-align:center;font-size:12px;font-weight:400;color:#000;line-height:13px;letter-spacing:0px;overflow:hidden;height:11px">1/150 sq ft</div>
<div class="t" style="left:555px;top:377px;width:10px;text-align:center;font-size:12px;font-weight:400;color:#000;line-height:13px;letter-spacing:0px;overflow:hidden;height:11px">#</div>
<div class="t" style="left:566px;top:377px;width:67px;text-align:center;font-size:12px;font-weight:400;color:#000;line-height:13px;letter-spacing:0px;overflow:hidden;height:11px">1</div>
<div class="t" style="left:634px;top:377px;width:67px;text-align:center;font-size:12px;font-weight:400;color:#000;line-height:13px;letter-spacing:0px;overflow:hidden;height:11px">0.2</div>
<div class="t" style="left:702px;top:377px;width:48px;text-align:center;font-size:12px;font-weight:400;color:#000;line-height:13px;letter-spacing:0px;overflow:hidden;height:11px">0.5</div>
<div class="t" style="left:751px;top:377px;width:52px;text-align:center;font-size:12px;font-weight:400;color:#000;line-height:13px;letter-spacing:0px;overflow:hidden;height:11px">0.5</div>
<div class="t" style="left:804px;top:377px;width:56px;text-align:center;font-size:12px;font-weight:400;color:#000;line-height:13px;letter-spacing:0px;overflow:hidden;height:11px">0</div>
<div class="t" style="left:861px;top:377px;width:58px;text-align:center;font-size:12px;font-weight:400;color:#000;line-height:13px;letter-spacing:0px;overflow:hidden;height:11px">0</div>
<div class="t" style="left:920px;top:377px;width:67px;text-align:center;font-size:12px;font-weight:400;color:#000;line-height:13px;letter-spacing:0px;overflow:hidden;height:11px">0.013</div>
<div class="t" style="left:988px;top:377px;width:67px;text-align:center;font-size:12px;font-weight:400;color:#000;line-height:13px;letter-spacing:0px;overflow:hidden;height:11px">0.013</div>
<div class="t" style="left:57px;top:391px;width:56px;text-align:center;font-size:12px;font-weight:400;color:#000;line-height:13px;letter-spacing:0px;overflow:hidden;height:11px">206</div>
<div class="t" style="left:116px;top:391px;font-size:12px;letter-spacing:0.35px;line-height:13px;overflow:hidden;height:11px;width:143px">Office</div>
<div class="t" style="left:269px;top:391px;font-size:12px;letter-spacing:0.35px;line-height:13px;overflow:hidden;height:11px;width:137px">Business</div>
<div class="t" style="left:409px;top:391px;font-size:12px;letter-spacing:0.2px;line-height:13px;overflow:hidden;height:11px;width:54px">B</div>
<div class="t" style="left:464px;top:391px;width:90px;text-align:center;font-size:12px;font-weight:400;color:#000;line-height:13px;letter-spacing:0px;overflow:hidden;height:11px">1/150 sq ft</div>
<div class="t" style="left:555px;top:391px;width:10px;text-align:center;font-size:12px;font-weight:400;color:#000;line-height:13px;letter-spacing:0px;overflow:hidden;height:11px">#</div>
<div class="t" style="left:566px;top:391px;width:67px;text-align:center;font-size:12px;font-weight:400;color:#000;line-height:13px;letter-spacing:0px;overflow:hidden;height:11px">1</div>
<div class="t" style="left:634px;top:391px;width:67px;text-align:center;font-size:12px;font-weight:400;color:#000;line-height:13px;letter-spacing:0px;overflow:hidden;height:11px">0.2</div>
<div class="t" style="left:702px;top:391px;width:48px;text-align:center;font-size:12px;font-weight:400;color:#000;line-height:13px;letter-spacing:0px;overflow:hidden;height:11px">0.5</div>
<div class="t" style="left:751px;top:391px;width:52px;text-align:center;font-size:12px;font-weight:400;color:#000;line-height:13px;letter-spacing:0px;overflow:hidden;height:11px">0.5</div>
<div class="t" style="left:804px;top:391px;width:56px;text-align:center;font-size:12px;font-weight:400;color:#000;line-height:13px;letter-spacing:0px;overflow:hidden;height:11px">0</div>
<div class="t" style="left:861px;top:391px;width:58px;text-align:center;font-size:12px;font-weight:400;color:#000;line-height:13px;letter-spacing:0px;overflow:hidden;height:11px">0</div>
<div class="t" style="left:920px;top:391px;width:67px;text-align:center;font-size:12px;font-weight:400;color:#000;line-height:13px;letter-spacing:0px;overflow:hidden;height:11px">0.013</div>
<div class="t" style="left:988px;top:391px;width:67px;text-align:center;font-size:12px;font-weight:400;color:#000;line-height:13px;letter-spacing:0px;overflow:hidden;height:11px">0.013</div>
<div class="t" style="left:57px;top:405px;width:56px;text-align:center;font-size:12px;font-weight:400;color:#000;line-height:13px;letter-spacing:0px;overflow:hidden;height:11px">301</div>
<div class="t" style="left:116px;top:405px;font-size:12px;letter-spacing:0.35px;line-height:13px;overflow:hidden;height:11px;width:143px">Children's Area</div>
<div class="t" style="left:269px;top:405px;font-size:12px;letter-spacing:0.35px;line-height:13px;overflow:hidden;height:11px;width:137px">Business-Classroom</div>
<div class="t" style="left:409px;top:405px;font-size:12px;letter-spacing:0.2px;line-height:13px;overflow:hidden;height:11px;width:54px">B</div>
<div class="t" style="left:464px;top:405px;width:90px;text-align:center;font-size:12px;font-weight:400;color:#000;line-height:13px;letter-spacing:0px;overflow:hidden;height:11px">1/20 sq ft</div>
<div class="t" style="left:555px;top:405px;width:10px;text-align:center;font-size:12px;font-weight:400;color:#000;line-height:13px;letter-spacing:0px;overflow:hidden;height:11px">#</div>
<div class="t" style="left:566px;top:405px;width:67px;text-align:center;font-size:12px;font-weight:400;color:#000;line-height:13px;letter-spacing:0px;overflow:hidden;height:11px">18</div>
<div class="t" style="left:634px;top:405px;width:67px;text-align:center;font-size:12px;font-weight:400;color:#000;line-height:13px;letter-spacing:0px;overflow:hidden;height:11px">3.6</div>
<div class="t" style="left:702px;top:405px;width:48px;text-align:center;font-size:12px;font-weight:400;color:#000;line-height:13px;letter-spacing:0px;overflow:hidden;height:11px">9</div>
<div class="t" style="left:751px;top:405px;width:52px;text-align:center;font-size:12px;font-weight:400;color:#000;line-height:13px;letter-spacing:0px;overflow:hidden;height:11px">9</div>
<div class="t" style="left:804px;top:405px;width:56px;text-align:center;font-size:12px;font-weight:400;color:#000;line-height:13px;letter-spacing:0px;overflow:hidden;height:11px">0</div>
<div class="t" style="left:861px;top:405px;width:58px;text-align:center;font-size:12px;font-weight:400;color:#000;line-height:13px;letter-spacing:0px;overflow:hidden;height:11px">0</div>
<div class="t" style="left:920px;top:405px;width:67px;text-align:center;font-size:12px;font-weight:400;color:#000;line-height:13px;letter-spacing:0px;overflow:hidden;height:11px">0.239</div>
<div class="t" style="left:988px;top:405px;width:67px;text-align:center;font-size:12px;font-weight:400;color:#000;line-height:13px;letter-spacing:0px;overflow:hidden;height:11px">0.239</div>
<div class="t" style="left:57px;top:419px;width:56px;text-align:center;font-size:12px;font-weight:400;color:#000;line-height:13px;letter-spacing:0px;overflow:hidden;height:11px">302</div>
<div class="t" style="left:116px;top:419px;font-size:12px;letter-spacing:0.35px;line-height:13px;overflow:hidden;height:11px;width:143px">Closet</div>
<div class="t" style="left:269px;top:419px;font-size:12px;letter-spacing:0.35px;line-height:13px;overflow:hidden;height:11px;width:137px">Business-Storage</div>
<div class="t" style="left:409px;top:419px;font-size:12px;letter-spacing:0.2px;line-height:13px;overflow:hidden;height:11px;width:54px">B</div>
<div class="t" style="left:464px;top:419px;width:90px;text-align:center;font-size:12px;font-weight:400;color:#000;line-height:13px;letter-spacing:0px;overflow:hidden;height:11px">1/500 sq ft</div>
<div class="t" style="left:555px;top:419px;width:10px;text-align:center;font-size:12px;font-weight:400;color:#000;line-height:13px;letter-spacing:0px;overflow:hidden;height:11px">#</div>
<div class="t" style="left:566px;top:419px;width:67px;text-align:center;font-size:12px;font-weight:400;color:#000;line-height:13px;letter-spacing:0px;overflow:hidden;height:11px">1</div>
<div class="t" style="left:634px;top:419px;width:67px;text-align:center;font-size:12px;font-weight:400;color:#000;line-height:13px;letter-spacing:0px;overflow:hidden;height:11px">0.2</div>
<div class="t" style="left:702px;top:419px;width:48px;text-align:center;font-size:12px;font-weight:400;color:#000;line-height:13px;letter-spacing:0px;overflow:hidden;height:11px">0.5</div>
<div class="t" style="left:751px;top:419px;width:52px;text-align:center;font-size:12px;font-weight:400;color:#000;line-height:13px;letter-spacing:0px;overflow:hidden;height:11px">0.5</div>
<div class="t" style="left:804px;top:419px;width:56px;text-align:center;font-size:12px;font-weight:400;color:#000;line-height:13px;letter-spacing:0px;overflow:hidden;height:11px">0</div>
<div class="t" style="left:861px;top:419px;width:58px;text-align:center;font-size:12px;font-weight:400;color:#000;line-height:13px;letter-spacing:0px;overflow:hidden;height:11px">0</div>
<div class="t" style="left:920px;top:419px;width:67px;text-align:center;font-size:12px;font-weight:400;color:#000;line-height:13px;letter-spacing:0px;overflow:hidden;height:11px">0.013</div>
<div class="t" style="left:988px;top:419px;width:67px;text-align:center;font-size:12px;font-weight:400;color:#000;line-height:13px;letter-spacing:0px;overflow:hidden;height:11px">0.013</div>
<div class="t" style="left:57px;top:433px;width:56px;text-align:center;font-size:12px;font-weight:400;color:#000;line-height:13px;letter-spacing:0px;overflow:hidden;height:11px">303</div>
<div class="t" style="left:116px;top:433px;font-size:12px;letter-spacing:0.35px;line-height:13px;overflow:hidden;height:11px;width:143px">Closet</div>
<div class="t" style="left:269px;top:433px;font-size:12px;letter-spacing:0.35px;line-height:13px;overflow:hidden;height:11px;width:137px">Business-Storage</div>
<div class="t" style="left:409px;top:433px;font-size:12px;letter-spacing:0.2px;line-height:13px;overflow:hidden;height:11px;width:54px">B</div>
<div class="t" style="left:464px;top:433px;width:90px;text-align:center;font-size:12px;font-weight:400;color:#000;line-height:13px;letter-spacing:0px;overflow:hidden;height:11px">1/500 sq ft</div>
<div class="t" style="left:555px;top:433px;width:10px;text-align:center;font-size:12px;font-weight:400;color:#000;line-height:13px;letter-spacing:0px;overflow:hidden;height:11px">#</div>
<div class="t" style="left:566px;top:433px;width:67px;text-align:center;font-size:12px;font-weight:400;color:#000;line-height:13px;letter-spacing:0px;overflow:hidden;height:11px">1</div>
<div class="t" style="left:634px;top:433px;width:67px;text-align:center;font-size:12px;font-weight:400;color:#000;line-height:13px;letter-spacing:0px;overflow:hidden;height:11px">0.2</div>
<div class="t" style="left:702px;top:433px;width:48px;text-align:center;font-size:12px;font-weight:400;color:#000;line-height:13px;letter-spacing:0px;overflow:hidden;height:11px">0.5</div>
<div class="t" style="left:751px;top:433px;width:52px;text-align:center;font-size:12px;font-weight:400;color:#000;line-height:13px;letter-spacing:0px;overflow:hidden;height:11px">0.5</div>
<div class="t" style="left:804px;top:433px;width:56px;text-align:center;font-size:12px;font-weight:400;color:#000;line-height:13px;letter-spacing:0px;overflow:hidden;height:11px">0</div>
<div class="t" style="left:861px;top:433px;width:58px;text-align:center;font-size:12px;font-weight:400;color:#000;line-height:13px;letter-spacing:0px;overflow:hidden;height:11px">0</div>
<div class="t" style="left:920px;top:433px;width:67px;text-align:center;font-size:12px;font-weight:400;color:#000;line-height:13px;letter-spacing:0px;overflow:hidden;height:11px">0.013</div>
<div class="t" style="left:988px;top:433px;width:67px;text-align:center;font-size:12px;font-weight:400;color:#000;line-height:13px;letter-spacing:0px;overflow:hidden;height:11px">0.013</div>
<div class="t" style="left:57px;top:447px;width:56px;text-align:center;font-size:12px;font-weight:400;color:#000;line-height:13px;letter-spacing:0px;overflow:hidden;height:11px">304</div>
<div class="t" style="left:116px;top:447px;font-size:12px;letter-spacing:0.35px;line-height:13px;overflow:hidden;height:11px;width:143px">Nursery</div>
<div class="t" style="left:269px;top:447px;font-size:12px;letter-spacing:0.35px;line-height:13px;overflow:hidden;height:11px;width:137px">Business-Classroom</div>
<div class="t" style="left:409px;top:447px;font-size:12px;letter-spacing:0.2px;line-height:13px;overflow:hidden;height:11px;width:54px">B</div>
<div class="t" style="left:464px;top:447px;width:90px;text-align:center;font-size:12px;font-weight:400;color:#000;line-height:13px;letter-spacing:0px;overflow:hidden;height:11px">1/20 sq ft</div>
<div class="t" style="left:555px;top:447px;width:10px;text-align:center;font-size:12px;font-weight:400;color:#000;line-height:13px;letter-spacing:0px;overflow:hidden;height:11px">#</div>
<div class="t" style="left:566px;top:447px;width:67px;text-align:center;font-size:12px;font-weight:400;color:#000;line-height:13px;letter-spacing:0px;overflow:hidden;height:11px">4</div>
<div class="t" style="left:634px;top:447px;width:67px;text-align:center;font-size:12px;font-weight:400;color:#000;line-height:13px;letter-spacing:0px;overflow:hidden;height:11px">0.8</div>
<div class="t" style="left:702px;top:447px;width:48px;text-align:center;font-size:12px;font-weight:400;color:#000;line-height:13px;letter-spacing:0px;overflow:hidden;height:11px">2</div>
<div class="t" style="left:751px;top:447px;width:52px;text-align:center;font-size:12px;font-weight:400;color:#000;line-height:13px;letter-spacing:0px;overflow:hidden;height:11px">2</div>
<div class="t" style="left:804px;top:447px;width:56px;text-align:center;font-size:12px;font-weight:400;color:#000;line-height:13px;letter-spacing:0px;overflow:hidden;height:11px">0</div>
<div class="t" style="left:861px;top:447px;width:58px;text-align:center;font-size:12px;font-weight:400;color:#000;line-height:13px;letter-spacing:0px;overflow:hidden;height:11px">0</div>
<div class="t" style="left:920px;top:447px;width:67px;text-align:center;font-size:12px;font-weight:400;color:#000;line-height:13px;letter-spacing:0px;overflow:hidden;height:11px">0.053</div>
<div class="t" style="left:988px;top:447px;width:67px;text-align:center;font-size:12px;font-weight:400;color:#000;line-height:13px;letter-spacing:0px;overflow:hidden;height:11px">0.053</div>
<div class="t" style="left:57px;top:461px;width:56px;text-align:center;font-size:12px;font-weight:400;color:#000;line-height:13px;letter-spacing:0px;overflow:hidden;height:11px">305</div>
<div class="t" style="left:116px;top:461px;font-size:12px;letter-spacing:0.35px;line-height:13px;overflow:hidden;height:11px;width:143px">Toddler's Room</div>
<div class="t" style="left:269px;top:461px;font-size:12px;letter-spacing:0.35px;line-height:13px;overflow:hidden;height:11px;width:137px">Business-Classroom</div>
<div class="t" style="left:409px;top:461px;font-size:12px;letter-spacing:0.2px;line-height:13px;overflow:hidden;height:11px;width:54px">B</div>
<div class="t" style="left:464px;top:461px;width:90px;text-align:center;font-size:12px;font-weight:400;color:#000;line-height:13px;letter-spacing:0px;overflow:hidden;height:11px">1/20 sq ft</div>
<div class="t" style="left:555px;top:461px;width:10px;text-align:center;font-size:12px;font-weight:400;color:#000;line-height:13px;letter-spacing:0px;overflow:hidden;height:11px">#</div>
<div class="t" style="left:566px;top:461px;width:67px;text-align:center;font-size:12px;font-weight:400;color:#000;line-height:13px;letter-spacing:0px;overflow:hidden;height:11px">5</div>
<div class="t" style="left:634px;top:461px;width:67px;text-align:center;font-size:12px;font-weight:400;color:#000;line-height:13px;letter-spacing:0px;overflow:hidden;height:11px">1</div>
<div class="t" style="left:702px;top:461px;width:48px;text-align:center;font-size:12px;font-weight:400;color:#000;line-height:13px;letter-spacing:0px;overflow:hidden;height:11px">2.5</div>
<div class="t" style="left:751px;top:461px;width:52px;text-align:center;font-size:12px;font-weight:400;color:#000;line-height:13px;letter-spacing:0px;overflow:hidden;height:11px">2.5</div>
<div class="t" style="left:804px;top:461px;width:56px;text-align:center;font-size:12px;font-weight:400;color:#000;line-height:13px;letter-spacing:0px;overflow:hidden;height:11px">0</div>
<div class="t" style="left:861px;top:461px;width:58px;text-align:center;font-size:12px;font-weight:400;color:#000;line-height:13px;letter-spacing:0px;overflow:hidden;height:11px">0</div>
<div class="t" style="left:920px;top:461px;width:67px;text-align:center;font-size:12px;font-weight:400;color:#000;line-height:13px;letter-spacing:0px;overflow:hidden;height:11px">0.067</div>
<div class="t" style="left:988px;top:461px;width:67px;text-align:center;font-size:12px;font-weight:400;color:#000;line-height:13px;letter-spacing:0px;overflow:hidden;height:11px">0.067</div>
<div class="t" style="left:57px;top:475px;width:56px;text-align:center;font-size:12px;font-weight:400;color:#000;line-height:13px;letter-spacing:0px;overflow:hidden;height:11px">306</div>
<div class="t" style="left:116px;top:475px;font-size:12px;letter-spacing:0.35px;line-height:13px;overflow:hidden;height:11px;width:143px">Kitchen</div>
<div class="t" style="left:269px;top:475px;font-size:12px;letter-spacing:0.35px;line-height:13px;overflow:hidden;height:11px;width:137px">Assembly-Kitchen</div>
<div class="t" style="left:409px;top:475px;font-size:12px;letter-spacing:0.2px;line-height:13px;overflow:hidden;height:11px;width:54px">A-3</div>
<div class="t" style="left:464px;top:475px;width:90px;text-align:center;font-size:12px;font-weight:400;color:#000;line-height:13px;letter-spacing:0px;overflow:hidden;height:11px">1/100 sq ft</div>
<div class="t" style="left:555px;top:475px;width:10px;text-align:center;font-size:12px;font-weight:400;color:#000;line-height:13px;letter-spacing:0px;overflow:hidden;height:11px">#</div>
<div class="t" style="left:566px;top:475px;width:67px;text-align:center;font-size:12px;font-weight:400;color:#000;line-height:13px;letter-spacing:0px;overflow:hidden;height:11px">4</div>
<div class="t" style="left:634px;top:475px;width:67px;text-align:center;font-size:12px;font-weight:400;color:#000;line-height:13px;letter-spacing:0px;overflow:hidden;height:11px">0.8</div>
<div class="t" style="left:702px;top:475px;width:48px;text-align:center;font-size:12px;font-weight:400;color:#000;line-height:13px;letter-spacing:0px;overflow:hidden;height:11px">2</div>
<div class="t" style="left:751px;top:475px;width:52px;text-align:center;font-size:12px;font-weight:400;color:#000;line-height:13px;letter-spacing:0px;overflow:hidden;height:11px">2</div>
<div class="t" style="left:804px;top:475px;width:56px;text-align:center;font-size:12px;font-weight:400;color:#000;line-height:13px;letter-spacing:0px;overflow:hidden;height:11px">0.053</div>
<div class="t" style="left:861px;top:475px;width:58px;text-align:center;font-size:12px;font-weight:400;color:#000;line-height:13px;letter-spacing:0px;overflow:hidden;height:11px">0.053</div>
<div class="t" style="left:920px;top:475px;width:67px;text-align:center;font-size:12px;font-weight:400;color:#000;line-height:13px;letter-spacing:0px;overflow:hidden;height:11px">0</div>
<div class="t" style="left:988px;top:475px;width:67px;text-align:center;font-size:12px;font-weight:400;color:#000;line-height:13px;letter-spacing:0px;overflow:hidden;height:11px">0</div>
<div class="t" style="left:57px;top:489px;width:56px;text-align:center;font-size:12px;font-weight:400;color:#000;line-height:13px;letter-spacing:0px;overflow:hidden;height:11px">307</div>
<div class="t" style="left:116px;top:489px;font-size:12px;letter-spacing:0.35px;line-height:13px;overflow:hidden;height:11px;width:143px">Closet</div>
<div class="t" style="left:269px;top:489px;font-size:12px;letter-spacing:0.35px;line-height:13px;overflow:hidden;height:11px;width:137px">Assembly-Storage</div>
<div class="t" style="left:409px;top:489px;font-size:12px;letter-spacing:0.2px;line-height:13px;overflow:hidden;height:11px;width:54px">A-3</div>
<div class="t" style="left:464px;top:489px;width:90px;text-align:center;font-size:12px;font-weight:400;color:#000;line-height:13px;letter-spacing:0px;overflow:hidden;height:11px">1/500 sq ft</div>
<div class="t" style="left:555px;top:489px;width:10px;text-align:center;font-size:12px;font-weight:400;color:#000;line-height:13px;letter-spacing:0px;overflow:hidden;height:11px">#</div>
<div class="t" style="left:566px;top:489px;width:67px;text-align:center;font-size:12px;font-weight:400;color:#000;line-height:13px;letter-spacing:0px;overflow:hidden;height:11px">1</div>
<div class="t" style="left:634px;top:489px;width:67px;text-align:center;font-size:12px;font-weight:400;color:#000;line-height:13px;letter-spacing:0px;overflow:hidden;height:11px">0.2</div>
<div class="t" style="left:702px;top:489px;width:48px;text-align:center;font-size:12px;font-weight:400;color:#000;line-height:13px;letter-spacing:0px;overflow:hidden;height:11px">0.5</div>
<div class="t" style="left:751px;top:489px;width:52px;text-align:center;font-size:12px;font-weight:400;color:#000;line-height:13px;letter-spacing:0px;overflow:hidden;height:11px">0.5</div>
<div class="t" style="left:804px;top:489px;width:56px;text-align:center;font-size:12px;font-weight:400;color:#000;line-height:13px;letter-spacing:0px;overflow:hidden;height:11px">0.013</div>
<div class="t" style="left:861px;top:489px;width:58px;text-align:center;font-size:12px;font-weight:400;color:#000;line-height:13px;letter-spacing:0px;overflow:hidden;height:11px">0.013</div>
<div class="t" style="left:920px;top:489px;width:67px;text-align:center;font-size:12px;font-weight:400;color:#000;line-height:13px;letter-spacing:0px;overflow:hidden;height:11px">0</div>
<div class="t" style="left:988px;top:489px;width:67px;text-align:center;font-size:12px;font-weight:400;color:#000;line-height:13px;letter-spacing:0px;overflow:hidden;height:11px">0</div>
<div class="t" style="left:57px;top:503px;width:56px;text-align:center;font-size:12px;font-weight:400;color:#000;line-height:13px;letter-spacing:0px;overflow:hidden;height:11px">A</div>
<div class="t" style="left:116px;top:503px;font-size:12px;letter-spacing:0.35px;line-height:13px;overflow:hidden;height:11px;width:143px">Corridor</div>
<div class="t" style="left:269px;top:503px;font-size:12px;letter-spacing:0.35px;line-height:13px;overflow:hidden;height:11px;width:137px">Circulation</div>
<div class="t" style="left:409px;top:503px;font-size:12px;letter-spacing:0.2px;line-height:13px;overflow:hidden;height:11px;width:54px"></div>
<div class="t" style="left:464px;top:503px;width:90px;text-align:center;font-size:12px;font-weight:400;color:#000;line-height:13px;letter-spacing:0px;overflow:hidden;height:11px">1/0 sq ft</div>
<div class="t" style="left:555px;top:503px;width:10px;text-align:center;font-size:12px;font-weight:400;color:#000;line-height:13px;letter-spacing:0px;overflow:hidden;height:11px">#</div>
<div class="t" style="left:566px;top:503px;width:67px;text-align:center;font-size:12px;font-weight:400;color:#000;line-height:13px;letter-spacing:0px;overflow:hidden;height:11px">0</div>
<div class="t" style="left:634px;top:503px;width:67px;text-align:center;font-size:12px;font-weight:400;color:#000;line-height:13px;letter-spacing:0px;overflow:hidden;height:11px">0</div>
<div class="t" style="left:702px;top:503px;width:48px;text-align:center;font-size:12px;font-weight:400;color:#000;line-height:13px;letter-spacing:0px;overflow:hidden;height:11px">0</div>
<div class="t" style="left:751px;top:503px;width:52px;text-align:center;font-size:12px;font-weight:400;color:#000;line-height:13px;letter-spacing:0px;overflow:hidden;height:11px">0</div>
<div class="t" style="left:804px;top:503px;width:56px;text-align:center;font-size:12px;font-weight:400;color:#000;line-height:13px;letter-spacing:0px;overflow:hidden;height:11px">0</div>
<div class="t" style="left:861px;top:503px;width:58px;text-align:center;font-size:12px;font-weight:400;color:#000;line-height:13px;letter-spacing:0px;overflow:hidden;height:11px">0</div>
<div class="t" style="left:920px;top:503px;width:67px;text-align:center;font-size:12px;font-weight:400;color:#000;line-height:13px;letter-spacing:0px;overflow:hidden;height:11px">0</div>
<div class="t" style="left:988px;top:503px;width:67px;text-align:center;font-size:12px;font-weight:400;color:#000;line-height:13px;letter-spacing:0px;overflow:hidden;height:11px">0</div>
<div style="left:58px;top:345px;width:55px;height:1px;background:#000;"></div>
<div style="left:58px;top:346px;width:55px;height:1px;background:#3c3c3c;"></div>
<div style="left:58px;top:347px;width:55px;height:1px;background:#000;"></div>
<div style="left:58px;top:359px;width:55px;height:1px;background:#000;"></div>
<div style="left:58px;top:360px;width:55px;height:1px;background:#3c3c3c;"></div>
<div style="left:58px;top:361px;width:55px;height:1px;background:#000;"></div>
<div style="left:114px;top:345px;width:945px;height:1px;background:#0c0606;"></div>
<div style="left:114px;top:346px;width:945px;height:1px;background:#3e3a38;"></div>
<div style="left:114px;top:347px;width:945px;height:1px;background:#6a3212;"></div>
<div style="left:114px;top:359px;width:945px;height:1px;background:#6a3212;"></div>
<div style="left:114px;top:360px;width:945px;height:1px;background:#3e3a38;"></div>
<div style="left:114px;top:361px;width:945px;height:1px;background:#0c0606;"></div>
<div style="left:113px;top:345px;width:1px;height:17px;background:#c4c4c4;"></div>
<div style="left:259px;top:345px;width:1px;height:17px;background:#c4c4c4;"></div>
<div style="left:266px;top:345px;width:1px;height:17px;background:#c4c4c4;"></div>
<div style="left:406px;top:345px;width:1px;height:17px;background:#c4c4c4;"></div>
<div style="left:463px;top:345px;width:1px;height:17px;background:#c4c4c4;"></div>
<div style="left:554px;top:345px;width:1px;height:17px;background:#c4c4c4;"></div>
<div style="left:565px;top:345px;width:1px;height:17px;background:#c4c4c4;"></div>
<div style="left:633px;top:345px;width:1px;height:17px;background:#c4c4c4;"></div>
<div style="left:700px;top:348px;width:3px;height:11px;background:#000080;"></div>
<div style="left:700px;top:345px;width:3px;height:3px;background:#f6ef7c;"></div>
<div style="left:700px;top:359px;width:3px;height:3px;background:#f6ef7c;"></div>
<div style="left:749px;top:348px;width:3px;height:11px;background:#000080;"></div>
<div style="left:749px;top:345px;width:3px;height:3px;background:#f6ef7c;"></div>
<div style="left:749px;top:359px;width:3px;height:3px;background:#f6ef7c;"></div>
<div style="left:802px;top:348px;width:3px;height:11px;background:#000080;"></div>
<div style="left:802px;top:345px;width:3px;height:3px;background:#f6ef7c;"></div>
<div style="left:802px;top:359px;width:3px;height:3px;background:#f6ef7c;"></div>
<div style="left:859px;top:348px;width:3px;height:11px;background:#000080;"></div>
<div style="left:859px;top:345px;width:3px;height:3px;background:#f6ef7c;"></div>
<div style="left:859px;top:359px;width:3px;height:3px;background:#f6ef7c;"></div>
<div style="left:918px;top:348px;width:3px;height:11px;background:#000080;"></div>
<div style="left:918px;top:345px;width:3px;height:3px;background:#f6ef7c;"></div>
<div style="left:918px;top:359px;width:3px;height:3px;background:#f6ef7c;"></div>
<div style="left:986px;top:348px;width:3px;height:11px;background:#000080;"></div>
<div style="left:986px;top:345px;width:3px;height:3px;background:#f6ef7c;"></div>
<div style="left:986px;top:359px;width:3px;height:3px;background:#f6ef7c;"></div>
<div style="left:1054px;top:348px;width:3px;height:11px;background:#000080;"></div>
<div style="left:1054px;top:345px;width:3px;height:3px;background:#f6ef7c;"></div>
<div style="left:1054px;top:359px;width:3px;height:3px;background:#f6ef7c;"></div>
<div style="left:57px;top:345px;width:1px;height:17px;background:#f4ee70;"></div>
<div class="t" style="left:57px;top:203.5px;width:38px;text-align:center;font-size:12px;font-weight:400;color:#000;">21</div>
<svg style="position:absolute;left:95px;top:202px" width="18" height="18" viewBox="0 0 18 18"><rect x="0.5" y="0.5" width="17" height="17" fill="#fff" stroke="#6a6a6a"/><rect x="11.85" y="3.2" width="1.5" height="6.8" fill="#000"/><path d="M10 5.6 L12.6 2.6 L15.2 5.6" stroke="#000" stroke-width="1.5" fill="none"/><path d="M13.3 11.9 L14.8 11.2 L14.8 15.2 M13.2 15.3 L16.6 15.3" stroke="#000" stroke-width="1.3" fill="none"/></svg>
<div class="t" style="left:114px;top:203.5px;width:123px;text-align:right;font-size:12px;font-weight:400;color:#000;">21</div>
<div style="left:241px;top:202px;width:18px;height:18px;background:#fff;border:1px solid #6a6a6a;box-sizing:border-box"></div>
<svg style="position:absolute;left:241px;top:209px" width="18" height="4" viewBox="0 0 18 4"><path d="M5.5 0 L12.5 0 L9.0 4 Z" fill="#000"/></svg>
<div style="left:260px;top:214px;width:6px;height:6px;background:#fff;border:1px solid #6a6a6a;box-sizing:border-box"></div>
<svg style="position:absolute;left:260px;top:215.5px" width="6" height="3" viewBox="0 0 6 3"><path d="M1.0 0 L5.0 0 L3.0 3 Z" fill="#000"/></svg>
<div class="t" style="left:267px;top:203.5px;width:117px;text-align:right;font-size:12px;font-weight:400;color:#000;">21</div>
<div style="left:388px;top:202px;width:18px;height:18px;background:#fff;border:1px solid #6a6a6a;box-sizing:border-box"></div>
<svg style="position:absolute;left:388px;top:209px" width="18" height="4" viewBox="0 0 18 4"><path d="M5.5 0 L12.5 0 L9.0 4 Z" fill="#000"/></svg>
<div class="t" style="left:407px;top:203.5px;width:34px;text-align:right;font-size:12px;font-weight:400;color:#000;">20</div>
<div style="left:445px;top:202px;width:18px;height:18px;background:#fff;border:1px solid #6a6a6a;box-sizing:border-box"></div>
<svg style="position:absolute;left:445px;top:209px" width="18" height="4" viewBox="0 0 18 4"><path d="M5.5 0 L12.5 0 L9.0 4 Z" fill="#000"/></svg>
<div class="t" style="left:464px;top:203.5px;width:68.5px;text-align:right;font-size:12px;font-weight:400;color:#000;">1/2685 sq ft</div>
<div style="left:536px;top:202px;width:18px;height:18px;background:#fff;border:1px solid #6a6a6a;box-sizing:border-box"></div>
<svg style="position:absolute;left:536px;top:209px" width="18" height="4" viewBox="0 0 18 4"><path d="M5.5 0 L12.5 0 L9.0 4 Z" fill="#000"/></svg>
<div class="t" style="left:556.5px;top:204px;font-size:12px;font-weight:400;color:#000;">#</div>
<div style="left:555px;top:210px;width:10px;height:10px;background:#fff;border:1px solid #6a6a6a;box-sizing:border-box"></div>
<svg style="position:absolute;left:555px;top:212.5px" width="10" height="4" viewBox="0 0 10 4"><path d="M1.5 0 L8.5 0 L5.0 4 Z" fill="#000"/></svg>
<div class="t" style="left:566px;top:203.5px;width:49px;text-align:center;font-size:12px;font-weight:400;color:#000;">165</div>
<div style="left:615px;top:202px;width:18px;height:18px;background:#fff;border:1px solid #6a6a6a;box-sizing:border-box"></div>
<svg style="position:absolute;left:615px;top:209px" width="18" height="4" viewBox="0 0 18 4"><path d="M5.5 0 L12.5 0 L9.0 4 Z" fill="#000"/></svg>
<div class="t" style="left:634px;top:203.5px;width:49px;text-align:center;font-size:12px;font-weight:400;color:#000;">33</div>
<div style="left:683px;top:202px;width:18px;height:18px;background:#fff;border:1px solid #6a6a6a;box-sizing:border-box"></div>
<svg style="position:absolute;left:683px;top:209px" width="18" height="4" viewBox="0 0 18 4"><path d="M5.5 0 L12.5 0 L9.0 4 Z" fill="#000"/></svg>
<div class="t" style="left:702px;top:203.5px;width:30px;text-align:center;font-size:12px;font-weight:400;color:#000;">82.5</div>
<div style="left:732px;top:202px;width:18px;height:18px;background:#fff;border:1px solid #6a6a6a;box-sizing:border-box"></div>
<svg style="position:absolute;left:732px;top:209px" width="18" height="4" viewBox="0 0 18 4"><path d="M5.5 0 L12.5 0 L9.0 4 Z" fill="#000"/></svg>
<div class="t" style="left:751px;top:203.5px;width:34px;text-align:center;font-size:12px;font-weight:400;color:#000;">82.5</div>
<div style="left:785px;top:202px;width:18px;height:18px;background:#fff;border:1px solid #6a6a6a;box-sizing:border-box"></div>
<svg style="position:absolute;left:785px;top:209px" width="18" height="4" viewBox="0 0 18 4"><path d="M5.5 0 L12.5 0 L9.0 4 Z" fill="#000"/></svg>
<div class="t" style="left:804px;top:203.5px;width:38px;text-align:center;font-size:12px;font-weight:400;color:#000;">1.45</div>
<div style="left:842px;top:202px;width:18px;height:18px;background:#fff;border:1px solid #6a6a6a;box-sizing:border-box"></div>
<svg style="position:absolute;left:842px;top:209px" width="18" height="4" viewBox="0 0 18 4"><path d="M5.5 0 L12.5 0 L9.0 4 Z" fill="#000"/></svg>
<div class="t" style="left:861px;top:203.5px;width:40px;text-align:center;font-size:12px;font-weight:400;color:#000;">1.45</div>
<div style="left:901px;top:202px;width:18px;height:18px;background:#fff;border:1px solid #6a6a6a;box-sizing:border-box"></div>
<svg style="position:absolute;left:901px;top:209px" width="18" height="4" viewBox="0 0 18 4"><path d="M5.5 0 L12.5 0 L9.0 4 Z" fill="#000"/></svg>
<div class="t" style="left:920px;top:203.5px;width:49px;text-align:center;font-size:12px;font-weight:400;color:#000;">0.745</div>
<div style="left:969px;top:202px;width:18px;height:18px;background:#fff;border:1px solid #6a6a6a;box-sizing:border-box"></div>
<svg style="position:absolute;left:969px;top:209px" width="18" height="4" viewBox="0 0 18 4"><path d="M5.5 0 L12.5 0 L9.0 4 Z" fill="#000"/></svg>
<div class="t" style="left:988px;top:203.5px;width:49px;text-align:center;font-size:12px;font-weight:400;color:#000;">0.745</div>
<div style="left:1037px;top:202px;width:18px;height:18px;background:#fff;border:1px solid #6a6a6a;box-sizing:border-box"></div>
<svg style="position:absolute;left:1037px;top:209px" width="18" height="4" viewBox="0 0 18 4"><path d="M5.5 0 L12.5 0 L9.0 4 Z" fill="#000"/></svg>
<div style="left:700px;top:200px;width:3px;height:20px;background:#000080;"></div>
<div style="left:749px;top:200px;width:3px;height:20px;background:#000080;"></div>
<div style="left:802px;top:200px;width:3px;height:20px;background:#000080;"></div>
<div style="left:859px;top:200px;width:3px;height:20px;background:#000080;"></div>
<div style="left:918px;top:200px;width:3px;height:20px;background:#000080;"></div>
<div style="left:986px;top:200px;width:3px;height:20px;background:#000080;"></div>
<div style="left:1054px;top:200px;width:3px;height:20px;background:#000080;"></div>
<div style="left:58px;top:515px;width:1001px;height:20px;background:#dadada;"></div>
<div style="left:113px;top:515px;width:1px;height:20px;background:#b8b8b8;"></div>
<div style="left:259px;top:515px;width:1px;height:20px;background:#b8b8b8;"></div>
<div style="left:266px;top:515px;width:1px;height:20px;background:#b8b8b8;"></div>
<div style="left:406px;top:515px;width:1px;height:20px;background:#b8b8b8;"></div>
<div style="left:463px;top:515px;width:1px;height:20px;background:#b8b8b8;"></div>
<div style="left:554px;top:515px;width:1px;height:20px;background:#b8b8b8;"></div>
<div style="left:565px;top:515px;width:1px;height:20px;background:#b8b8b8;"></div>
<div style="left:633px;top:515px;width:1px;height:20px;background:#b8b8b8;"></div>
<div style="left:701px;top:515px;width:1px;height:20px;background:#b8b8b8;"></div>
<div style="left:750px;top:515px;width:1px;height:20px;background:#b8b8b8;"></div>
<div style="left:803px;top:515px;width:1px;height:20px;background:#b8b8b8;"></div>
<div style="left:860px;top:515px;width:1px;height:20px;background:#b8b8b8;"></div>
<div style="left:919px;top:515px;width:1px;height:20px;background:#b8b8b8;"></div>
<div style="left:987px;top:515px;width:1px;height:20px;background:#b8b8b8;"></div>
<div style="left:1055px;top:515px;width:1px;height:20px;background:#b8b8b8;"></div>
<div class="t" style="left:114px;top:519px;width:142px;text-align:right;font-size:12px;font-weight:700;color:#000;letter-spacing:-0.5px">TOTAL BUILDING</div>
<div class="t" style="left:267px;top:519px;width:136.5px;text-align:right;font-size:12px;font-weight:700;color:#000;letter-spacing:-0.35px">TOTAL OCCUPANTS</div>
<div class="t" style="left:557px;top:519px;font-size:12px;font-weight:700;color:#000;">#</div>
<div class="t" style="left:566px;top:519px;width:67px;text-align:center;font-size:12px;font-weight:700;color:#000;">165</div>
<div class="t" style="left:3px;top:122px;width:55px;text-align:center;font-size:12px;font-weight:400;color:#000;">1</div>
<div class="t" style="left:3px;top:172px;width:55px;text-align:center;font-size:12px;font-weight:400;color:#000;">2</div>
<div class="t" style="left:3px;top:205px;width:55px;text-align:center;font-size:12px;font-weight:400;color:#000;">3</div>
<div class="t" style="left:3px;top:520px;width:55px;text-align:center;font-size:12px;font-weight:400;color:#000;">4</div>
<div style="left:49px;top:123px;width:4px;height:8px;background:linear-gradient(#7a7a7a,#d4d4d4)"></div>
<div style="left:49px;top:173px;width:4px;height:8px;background:linear-gradient(#7a7a7a,#d4d4d4)"></div>
<div style="left:49px;top:206px;width:4px;height:8px;background:linear-gradient(#7a7a7a,#d4d4d4)"></div>
<div style="left:49px;top:521px;width:4px;height:8px;background:linear-gradient(#7a7a7a,#d4d4d4)"></div>
<div style="left:8px;top:207px;width:5px;height:5px;background:#000;transform:rotate(45deg)"></div>
<div style="left:56px;top:86px;width:1px;height:449px;background:#000;"></div>
</body></html>
